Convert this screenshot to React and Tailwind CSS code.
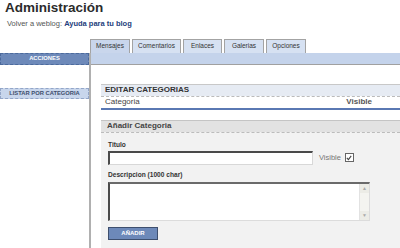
import React from 'react'

// ── Top tabs ─────────────────────────────────────────────────────────────────
const TABS = [
  { label: 'Mensajes', w: 'w-[40px]', active: true },
  { label: 'Comentarios', w: 'w-[49px]' },
  { label: 'Enlaces', w: 'w-[39px]' },
  { label: 'Galerias', w: 'w-[40px]' },
  { label: 'Opciones', w: 'w-[40px]' },
]

function Tab({ label, w, active }) {
  return (
    <div
      className={
        'h-[14px] flex items-center justify-center border border-b-0 border-[#a3a3a3] text-[6.5px] text-[#333] ' +
        w + (active ? ' bg-[#c9d6ec]' : ' bg-[#d6e1f2]')
      }
    >
      {label}
    </div>
  )
}

function Checkbox() {
  return (
    <span className="w-[9px] h-[9px] bg-white border border-[#666] flex items-center justify-center">
      <svg width="6" height="6" viewBox="0 0 6 6">
        <path d="M0.8 2.8 L2.4 4.6 L5.2 0.8" fill="none" stroke="#444" strokeWidth="1.1" />
      </svg>
    </span>
  )
}

function DashedLine({ color }) {
  return <div className={'border-t border-dashed ' + color} />
}

export default function App() {
  return (
    <div className="w-[400px] h-[248px] overflow-hidden bg-white font-['Liberation_Sans',Arial,sans-serif]">
      {/* header */}
      <div className="pl-[5px] pt-[1px] h-[16px] text-[13.5px] font-bold leading-none text-[#2b2b2b]">
        Administración
      </div>
      <div className="pl-[7px] mt-[4px] text-[7.5px] leading-none text-[#555]">
        Volver a weblog: <a className="font-bold text-[#23407c]">Ayuda para tu blog</a>
      </div>

      {/* tabs */}
      <div className="mt-[11px] ml-[90px] flex gap-[2px]">
        {TABS.map(t => <Tab key={t.label} {...t} />)}
      </div>

      <div className="flex h-[196px]">
        {/* sidebar */}
        <div className="w-[89px] shrink-0">
          <div className="h-[12px] bg-[#6d89b9] border border-dashed border-[#4c6a9c] flex items-center justify-center text-[5.8px] font-bold text-white">
            ACCIONES
          </div>
          <div className="mt-[23px] h-[11px] bg-[#c8d6ec] border border-dashed border-[#93a6c8] flex items-center justify-center text-[5.8px] font-bold text-[#3d4d6d]">
            LISTAR POR CATEGORIA
          </div>
        </div>

        {/* main */}
        <div className="flex-1 border-l-2 border-[#b0b0b0]">
          <div className="h-[12px] bg-[#c4d3eb] border-b border-[#a0a0a0]" />

          <div className="pl-[10px] pt-[19px]">
            {/* editar categorias */}
            <div className="h-[12px] bg-[#e6ebf3] border-t border-[#c8c8c8] flex items-center pl-[4px] text-[8px] font-bold text-[#333]">
              EDITAR CATEGORIAS
            </div>
            <DashedLine color="border-[#bbb]" />
            <div className="h-[13px] border-b-2 border-[#5a78b3] flex items-center justify-between pl-[4px] pr-[28px] text-[8px] text-[#444]">
              <span>Categoria</span>
              <span className="font-bold text-[#555]">Visible</span>
            </div>

            {/* añadir categoria */}
            <div className="mt-[10px] bg-[#f2f2f2] h-[130px]">
              <div className="h-[12px] bg-[#e2e2e2] border-t border-[#c4c4c4] flex items-center pl-[6px] text-[8px] font-bold text-[#444]">
                Añadir Categoria
              </div>
              <DashedLine color="border-[#bcbcbc]" />
              <div className="pl-[7px] pt-[9px]">
                <div className="text-[6.6px] font-bold leading-none text-[#333]">Titulo</div>
                <div className="mt-[3px] flex items-center">
                  <div className="w-[205px] h-[14px] bg-white border border-[#d8d8d8] border-t-2 border-t-[#4a4a4a] border-l-2 border-l-[#4a4a4a]" />
                  <span className="ml-[6px] text-[7.5px] text-[#777]">Visible</span>
                  <span className="ml-[4px] mt-[-1px]"><Checkbox /></span>
                </div>
                <div className="mt-[7px] text-[6.6px] font-bold leading-none text-[#333]">Descripcion (1000 char)</div>
                <div className="mt-[3px] w-[262px] h-[39px] bg-white border border-[#dcdcdc] border-t-2 border-t-[#6a6a6a] border-l-2 border-l-[#4a4a4a] flex justify-end">
                  <div className="w-[10px] bg-[#f4f4f0] border-l border-[#e2e2e2] flex flex-col justify-between items-center text-[5px] text-[#aaa] leading-none">
                    <span className="w-full h-[9px] bg-[#ecece6] flex items-center justify-center">▲</span>
                    <span className="w-full h-[9px] bg-[#ecece6] flex items-center justify-center">▼</span>
                  </div>
                </div>
                <div className="mt-[6px] w-[50px] h-[13px] bg-[#6d89b9] border border-[#3e4f6e] flex items-center justify-center text-[6px] font-bold text-white">
                  AÑADIR
                </div>
              </div>
            </div>
          </div>
        </div>
      </div>
    </div>
  )
}
